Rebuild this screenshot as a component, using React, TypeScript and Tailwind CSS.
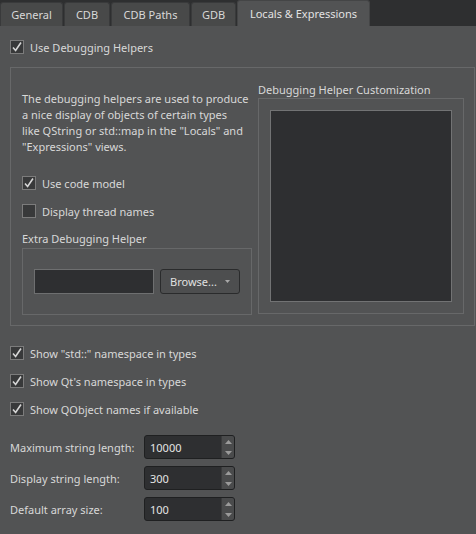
import React from 'react';

function Check({ checked }: { checked: boolean }) {
  return (
    <span className="w-[14px] h-[14px] shrink-0 border border-[#7c7c7c] bg-[#38393a] flex items-center justify-center">
      {checked && (
        <svg width="12" height="12" viewBox="0 0 12 12">
          <path d="M2 6.5 L4.6 9.5 L10 1.5" fill="none" stroke="#d6d6d6" strokeWidth="1.6" />
        </svg>
      )}
    </span>
  );
}

function CheckRow({ label, checked }: { label: string; checked: boolean }) {
  return (
    <div className="flex items-center h-[14px] gap-[6px] whitespace-nowrap">
      <Check checked={checked} />
      <span>{label}</span>
    </div>
  );
}

function Spin({ value }: { value: string }) {
  return (
    <div className="w-[91px] h-[24px] flex rounded-[3px] border border-[#1f2021] bg-[#2e2f31] overflow-hidden">
      <span className="flex-1 pl-[5px] flex items-center text-[#e4e4e4]">{value}</span>
      <span className="w-[13px] flex flex-col bg-[#4a4b4c] border-l border-[#3a3b3c]">
        <span className="flex-1 flex items-center justify-center">
          <svg width="7" height="4" viewBox="0 0 7 4"><path d="M0 4 L3.5 0 L7 4 Z" fill="#9a9a9a" /></svg>
        </span>
        <span className="flex-1 flex items-center justify-center">
          <svg width="7" height="4" viewBox="0 0 7 4"><path d="M0 0 L3.5 4 L7 0 Z" fill="#9a9a9a" /></svg>
        </span>
      </span>
    </div>
  );
}

const tabs = [
  { name: 'General', w: 'w-[63px]' },
  { name: 'CDB', w: 'w-[46px]' },
  { name: 'CDB Paths', w: 'w-[79px]' },
  { name: 'GDB', w: 'w-[45px]' },
];

export default function App() {
  return (
    <div className="w-[476px] h-[534px] bg-[#2e2f30] flex flex-col text-[11px] text-[#d8d8d8] font-['Noto_Sans',sans-serif] leading-none">
      {/* tab bar */}
      <div className="h-[26px] flex items-end shrink-0 whitespace-nowrap">
        {tabs.map((t) => (
          <div
            key={t.name}
            className={`${t.w} h-[24px] mr-[1px] flex items-center justify-center bg-[#484949] border border-b-0 border-[#393a3b] rounded-t-[3px]`}
          >
            {t.name}
          </div>
        ))}
        <div className="w-[133px] h-[26px] flex items-center justify-center bg-[#525354] border border-b-0 border-[#444546] rounded-t-[3px] text-[#e2e2e2]">
          Locals &amp; Expressions
        </div>
      </div>

      {/* page */}
      <div className="flex-1 bg-[#525354] pl-[10px] pr-[1px] pt-[14px] flex flex-col">
        <CheckRow label="Use Debugging Helpers" checked />

        <div className="mt-[13px] h-[259px] border border-[#676869] flex pl-[11px]">
          <div className="w-[230px] flex flex-col">
            <p className="mt-[23px] leading-[16px] whitespace-nowrap">
              The debugging helpers are used to produce
              <br />a nice display of objects of certain types
              <br />like QString or std::map in the "Locals" and
              <br />"Expressions" views.
            </p>
            <div className="mt-[21px]">
              <CheckRow label="Use code model" checked />
            </div>
            <div className="mt-[14px]">
              <CheckRow label="Display thread names" checked={false} />
            </div>
            <div className="mt-[13px] h-[14px] flex items-center">Extra Debugging Helper</div>
            <div className="mt-[3px] h-[67px] border border-[#676869] flex items-center gap-[6px] pl-[11px]">
              <div className="w-[120px] h-[25px] border border-[#6e6f70] bg-[#2e2f31]" />
              <div className="w-[80px] h-[25px] rounded-[3px] border border-[#2a2b2c] bg-[#4d4e4f] flex items-center pl-[9px] pr-[9px] text-[#e0e0e0]">
                <span className="flex-1">Browse...</span>
                <svg width="5" height="3" viewBox="0 0 5 3"><path d="M0 0 L2.5 3 L5 0 Z" fill="#a8a8a8" /></svg>
              </div>
            </div>
          </div>

          <div className="ml-[6px] w-[206px] flex flex-col">
            <div className="mt-[14px] h-[14px] flex items-center whitespace-nowrap">Debugging Helper Customization</div>
            <div className="mt-[2px] h-[216px] border border-[#676869] p-[11px]">
              <div className="w-full h-full border border-[#727374] bg-[#2e2f31]" />
            </div>
          </div>
        </div>

        <div className="mt-[20px] flex flex-col gap-[14px]">
          <CheckRow label={'Show "std::" namespace in types'} checked />
          <CheckRow label="Show Qt's namespace in types" checked />
          <CheckRow label="Show QObject names if available" checked />
        </div>

        <div className="mt-[19px] flex flex-col gap-[7px]">
          {[
            ['Maximum string length:', '10000'],
            ['Display string length:', '300'],
            ['Default array size:', '100'],
          ].map(([label, value]) => (
            <div key={label} className="flex items-center whitespace-nowrap">
              <span className="w-[134px]">{label}</span>
              <Spin value={value} />
            </div>
          ))}
        </div>
      </div>
    </div>
  );
}
